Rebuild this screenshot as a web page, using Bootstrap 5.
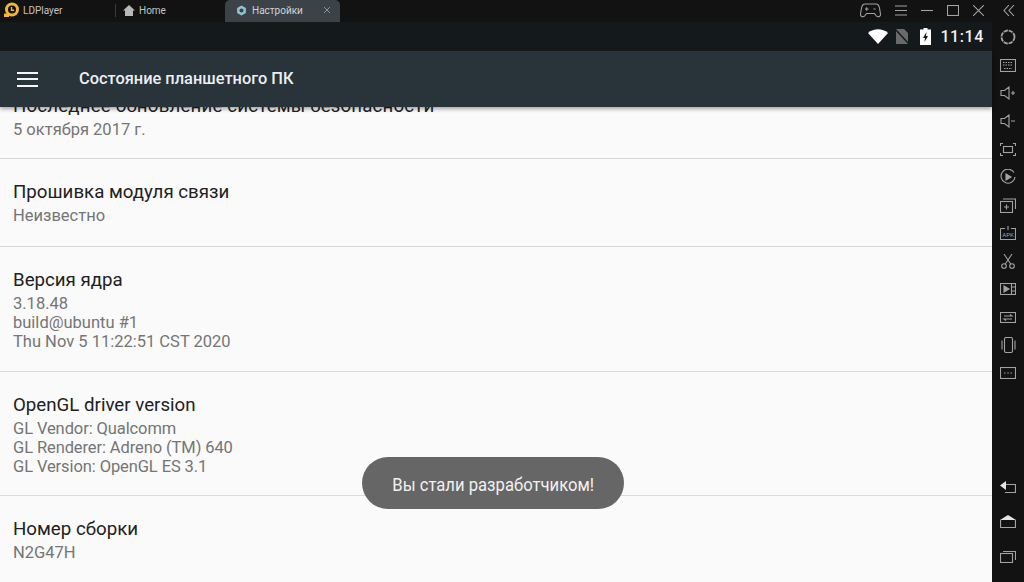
<!DOCTYPE html>
<html lang="ru">
<head>
  <meta charset="UTF-8" />
  <meta name="viewport" content="width=device-width, initial-scale=1.0"/>
  <title>LDPlayer</title>
  <link href="https://cdn.jsdelivr.net/npm/bootstrap@5.3.0/dist/css/bootstrap.min.css" rel="stylesheet">
  <style>
    html, body { height: 100%; overflow: hidden; }
    body { background: #121212; font-family: Roboto, "Liberation Sans", sans-serif; width: 1024px; height: 582px; }
    .title-bar { height: 22px; padding-bottom: 2px; background: #121212; color: #c4c4c4; font-size: 10px; }
    .logo-area { width: 115px; padding-left: 3px; gap: 4px; }
    .sep-line { width: 1px; height: 13px; background: #3a3a3a; }
    .home-tab { width: 109px; padding-left: 7px; gap: 4px; }
    .active-tab { width: 115px; height: 22px; background: #3b4348; border-radius: 5px 5px 0 0; padding: 0 9px 2px 11px; gap: 5px; color: #d0d4d6; }
    .win-btns { gap: 14px; padding-right: 9px; }
    .chevron-gap { margin-left: 5px; }
    .screen-col { width: 992px; }
    .status-strip { height: 29px; background: #14191c; color: #f2f2f2; font-size: 16px; font-weight: 500; padding-right: 8px; letter-spacing: .6px; }
    .wifi-ico { margin-right: 7px; }
    .sim-ico { margin-right: 11px; }
    .batt-ico { margin-right: 9px; }
    .tool-bar { height: 56px; background: #28333a; color: #eceff1; font-size: 16.4px; font-weight: 500; padding-left: 17px; gap: 41px; box-shadow: 0 2px 4px rgba(0,0,0,.35); position: relative; z-index: 2; }
    .burger { width: 21px; height: 15px; display: flex; flex-direction: column; justify-content: space-between; }
    .burger i { display: block; height: 2px; background: #f4f6f7; }
    .info-list { height: 475px; background: #fafafa; overflow: hidden; position: relative; }
    .info-row { padding: 21px 13px 21px; border-bottom: 1px solid #d9d9d9; }
    .info-row.clipped { height: 52px; padding-top: 0; padding-bottom: 19px; display: flex; flex-direction: column; justify-content: flex-end; overflow: hidden; }
    .info-row.clipped .row-title { letter-spacing: .17px; }
    .info-row.tight { padding-bottom: 19px; }
    .info-row.snug { padding-bottom: 20px; }
    .info-row:last-child { border-bottom: 0; }
    .row-title { font-size: 18.7px; line-height: 24px; color: #212121; white-space: nowrap; }
    .row-sub { font-size: 16.5px; line-height: 19px; color: #757575; margin-top: 2px; }
    .gl-lines { letter-spacing: -.1px; }
    .toast-pill { position: absolute; left: 362px; top: 350px; width: 262px; height: 52px; border-radius: 26px; background: #666; color: #f1f1f1; font-size: 19px; line-height: 56px; text-align: center; white-space: nowrap; }
    .toast-text { display: inline-block; transform: scaleX(.876); }
    .side-bar { width: 32px; height: 560px; background: #121212; padding-top: 1px; }
    .side-btn { height: 28px; display: flex; align-items: center; justify-content: center; }
    .side-btn.nav-key { height: 35px; }
    .side-bar svg, .title-bar svg, .status-strip svg { display: block; }
    .ico { fill: none; stroke: #a2a2a2; stroke-width: 1.1; }
    .ico-ring { stroke-width: 1.8; }
  </style>
</head>
<body>
  <!-- верхняя панель -->
  <div class="title-bar d-flex align-items-center">
    <div class="logo-area d-flex align-items-center">
      <svg width="16" height="16" viewBox="0 0 16 16">
        <circle cx="9" cy="7.5" r="5.5" fill="none" stroke="#f2b632" stroke-width="3"/>
        <rect x="1" y="11.5" width="5" height="3.5" fill="#f2b632"/>
        <path d="M8.5 5v3.2h2.6" fill="none" stroke="#f2b632" stroke-width="1.4"/>
      </svg>
      <span>LDPlayer</span>
    </div>
    <div class="sep-line"></div>
    <div class="home-tab d-flex align-items-center">
      <svg width="12" height="11" viewBox="0 0 12 11"><path d="M6 0 12 5.5H10V11H2V5.5H0Z" fill="#b8b8b8"/></svg>
      <span>Home</span>
    </div>
    <div class="active-tab d-flex align-items-center align-self-start">
      <svg width="11" height="11" viewBox="0 0 12 12"><path d="M6 .5 10.8 3.2V8.8L6 11.5 1.2 8.8V3.2Z" fill="#8fc4cf"/><circle cx="6" cy="6" r="2.2" fill="#3b4348"/></svg>
      <span class="flex-grow-1">Настройки</span>
      <svg width="8" height="8" viewBox="0 0 8 8"><path d="M1 1 7 7M7 1 1 7" stroke="#8a9296" stroke-width="1"/></svg>
    </div>
    <div class="win-btns d-flex align-items-center ms-auto">
      <svg width="21" height="15" viewBox="0 0 21 15" class="ico"><path d="M5 1H16C18 1 19 2.500 19.500 5L20.500 11C20.800 13.500 18 15 16 12.500L14.500 10.500H6.500L5 12.500C3 15 .2 13.500 .5 11L1.500 5C2 2.500 3 1 5 1ZM5 6H8.500M6.700 4.300V7.700M13.500 6H15.500"/></svg>
      <svg width="12" height="11" viewBox="0 0 12 11" class="ico"><path d="M0 1H12M0 5.500H12M0 10H12"/></svg>
      <svg width="12" height="11" viewBox="0 0 12 11" class="ico"><path d="M0 5.500H12"/></svg>
      <svg width="12" height="11" viewBox="0 0 12 11" class="ico"><rect x=".5" y=".5" width="11" height="10"/></svg>
      <svg width="11" height="11" viewBox="0 0 11 11" class="ico"><path d="M0 0 11 11M11 0 0 11"/></svg>
      <svg width="12" height="11" viewBox="0 0 12 11" class="ico chevron-gap"><path d="M6 0 1 5.500 6 11M11 0 6 5.500 11 11"/></svg>
    </div>
  </div>

  <div class="d-flex">
    <div class="screen-col">
      <div class="status-strip d-flex align-items-center justify-content-end">
        <svg class="wifi-ico" width="20" height="15" viewBox="0 0 20 15"><path d="M0 4C5.500-1 14.500-1 20 4L10 15Z" fill="#fff"/></svg>
        <svg class="sim-ico" width="14" height="15" viewBox="0 0 14 15"><path d="M1 0H9L13 4V15H1Z" fill="#6a6a6a"/><path d="M0 0 14 15" stroke="#14191c" stroke-width="1.500"/></svg>
        <svg class="batt-ico" width="11" height="17" viewBox="0 0 11 17"><path d="M3.500 0H7.500V1.500H11V17H0V1.500H3.500Z" fill="#fff"/><path d="M6.500 4 3 10H5L4.500 14 8 8H6Z" fill="#14191c"/></svg>
        <span>11:14</span>
      </div>
      <div class="tool-bar d-flex align-items-center">
        <div class="burger"><i></i><i></i><i></i></div>
        <span>Состояние планшетного ПК</span>
      </div>
      <div class="info-list">
        <div class="info-row clipped">
          <div class="row-title">Последнее обновление системы безопасности</div>
          <div class="row-sub">5 октября 2017 г.</div>
        </div>
        <div class="info-row">
          <div class="row-title">Прошивка модуля связи</div>
          <div class="row-sub">Неизвестно</div>
        </div>
        <div class="info-row snug">
          <div class="row-title">Версия ядра</div>
          <div class="row-sub">3.18.48<br>build@ubuntu #1<br>Thu Nov 5 11:22:51 CST 2020</div>
        </div>
        <div class="info-row tight">
          <div class="row-title">OpenGL driver version</div>
          <div class="row-sub gl-lines">GL Vendor: Qualcomm<br>GL Renderer: Adreno (TM) 640<br>GL Version: OpenGL ES 3.1</div>
        </div>
        <div class="info-row">
          <div class="row-title">Номер сборки</div>
          <div class="row-sub">N2G47H</div>
        </div>
        <div class="toast-pill"><span class="toast-text">Вы стали разработчиком!</span></div>
      </div>
    </div>

    <!-- боковая панель -->
    <div class="side-bar d-flex flex-column">
      <div class="side-btn"><svg width="16" height="16" viewBox="0 0 16 16" class="ico ico-ring"><circle cx="8" cy="8" r="6.500" stroke-dasharray="4.200 .9"/></svg></div>
      <div class="side-btn"><svg width="16" height="13" viewBox="0 0 16 13" class="ico"><rect x=".5" y=".5" width="15" height="12"/><path d="M3 3.500H13M3 6H13M4 9.500H12" stroke-dasharray="1.500 1"/></svg></div>
      <div class="side-btn"><svg width="16" height="14" viewBox="0 0 16 14" class="ico"><path d="M1 4.500H4.500L9 1V13L4.500 9.500H1ZM11 7H15M13 5V9"/></svg></div>
      <div class="side-btn"><svg width="16" height="14" viewBox="0 0 16 14" class="ico"><path d="M1 4.500H4.500L9 1V13L4.500 9.500H1ZM11 7H15"/></svg></div>
      <div class="side-btn"><svg width="16" height="13" viewBox="0 0 16 13" class="ico"><path d="M.5 3V.5H3M13 .5H15.500V3M15.500 10V12.500H13M3 12.500H.5V10"/><rect x="3.500" y="3.500" width="9" height="6"/></svg></div>
      <div class="side-btn"><svg width="16" height="16" viewBox="0 0 16 16" class="ico"><path d="M14 3.500A7 7 0 1 0 15 8"/><path d="M6 5 11 8 6 11Z" fill="#a2a2a2"/></svg></div>
      <div class="side-btn"><svg width="16" height="15" viewBox="0 0 16 15" class="ico"><rect x=".5" y="3.500" width="12" height="11"/><path d="M3 1H15.500V11M6.500 6.500V11.500M4 9H9"/></svg></div>
      <div class="side-btn"><svg width="16" height="14" viewBox="0 0 16 14" class="ico"><path d="M.5 2.500V13.500H15.500V2.500H11M5 2.500H.5M8 0V4"/><text x="8" y="11" text-anchor="middle" font-size="6" fill="#a2a2a2" stroke="none" font-family="Roboto">APK</text></svg></div>
      <div class="side-btn"><svg width="14" height="15" viewBox="0 0 14 15" class="ico"><circle cx="3" cy="12" r="2.300"/><circle cx="11" cy="12" r="2.300"/><path d="M4.300 10 11 0M9.700 10 3 0"/></svg></div>
      <div class="side-btn"><svg width="16" height="12" viewBox="0 0 16 12" class="ico"><rect x=".5" y=".5" width="15" height="11"/><path d="M11.500 .5V11.500M11.500 4H15.500M11.500 8H15.500"/><path d="M4 3 9 6 4 9Z" fill="#a2a2a2"/></svg></div>
      <div class="side-btn"><svg width="16" height="11" viewBox="0 0 16 11" class="ico"><rect x=".5" y=".5" width="15" height="10"/><path d="M4 4H12L10 2.500M12 7H4L6 8.500"/></svg></div>
      <div class="side-btn"><svg width="15" height="16" viewBox="0 0 15 16" class="ico"><rect x="3.500" y=".5" width="8" height="15" rx="1.500"/><path d="M1 3.500V12.500M14 3.500V12.500"/></svg></div>
      <div class="side-btn"><svg width="16" height="12" viewBox="0 0 16 12" class="ico"><rect x=".5" y=".5" width="15" height="11"/><path d="M4 6H5.500M7.300 6H8.800M10.500 6H12"/></svg></div>
      <div class="mt-auto d-flex flex-column pb-2">
        <div class="side-btn nav-key"><svg width="16" height="12" viewBox="0 0 16 12"><path d="M0 4.500 6 0V9Z" fill="#e4e4e4"/><path d="M6 3.500H15.500V11.500H5" fill="none" stroke="#a2a2a2" stroke-width="1.200"/></svg></div>
        <div class="side-btn nav-key"><svg width="16" height="13" viewBox="0 0 16 13"><path d="M8 0 16 5H0Z" fill="#e4e4e4"/><path d="M.5 5V12.500H15.500V5" fill="none" stroke="#a2a2a2" stroke-width="1.200"/></svg></div>
        <div class="side-btn nav-key"><svg width="16" height="12" viewBox="0 0 16 12" class="ico"><rect x=".5" y="2.500" width="12" height="9"/><path d="M3 .5H15.500V9"/></svg></div>
      </div>
    </div>
  </div>
  <script src="https://cdn.jsdelivr.net/npm/bootstrap@5.3.0/dist/js/bootstrap.bundle.min.js"></script>
</body>
</html>
